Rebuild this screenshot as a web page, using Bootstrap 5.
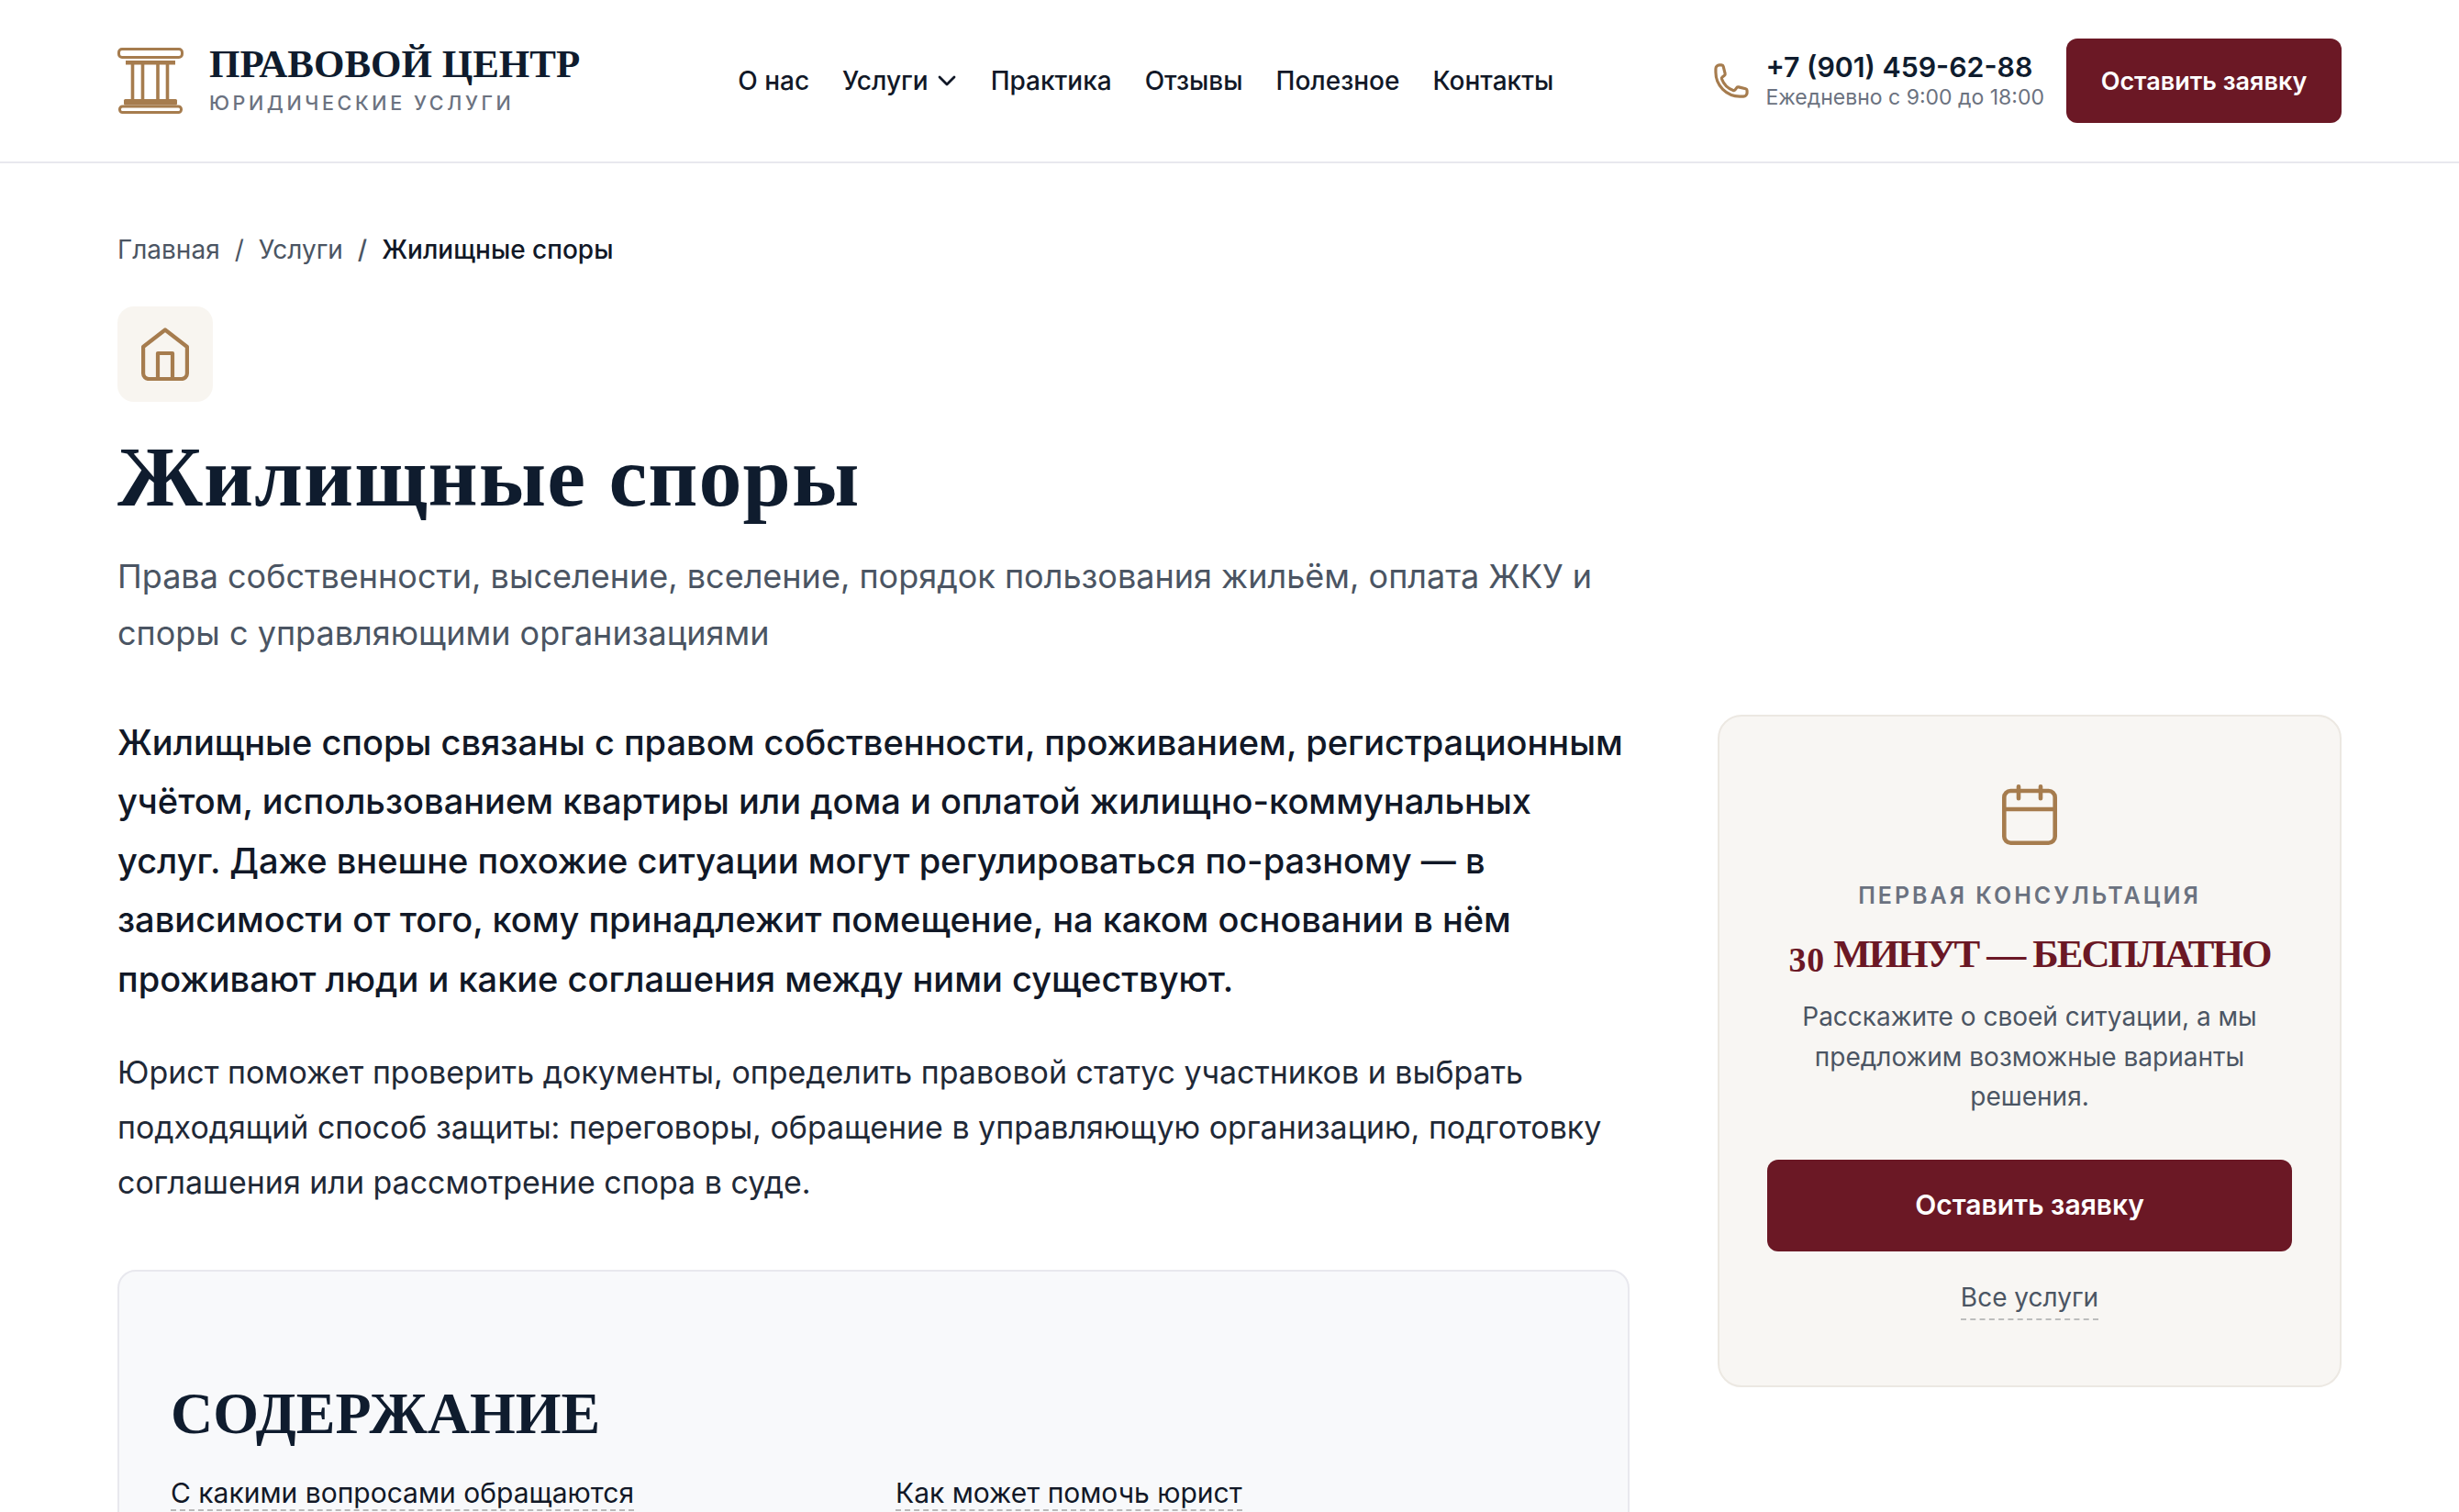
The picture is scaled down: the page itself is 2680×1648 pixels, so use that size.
<!DOCTYPE html>
<html lang="ru">
<head>
<meta charset="utf-8">
<title>Жилищные споры</title>
<link href="https://cdn.jsdelivr.net/npm/bootstrap@5.3.0/dist/css/bootstrap.min.css" rel="stylesheet">
<style>
html,body{height:1648px;overflow:hidden}
body{font-family:Inter,"Noto Sans",sans-serif;color:#111827;background:#fff}
.serif{font-family:"Liberation Serif",serif;font-weight:700}
.wrap{padding:0 128px}
.topbar{height:178px;border-bottom:2px solid #e8e8ee;padding:0 128px}
.logo-mark{margin-right:28px}
.logo-name{font-size:43px;line-height:48px;letter-spacing:0;color:#0f1c2e}
.logo-sub{font-size:21.5px;line-height:28px;letter-spacing:3.6px;font-weight:500;color:#6b7280;margin-top:4px}
.logo-text{margin-top:-5px}
.topnav{margin-left:172px;gap:36px}
.topnav .nav-link{padding:0;font-size:28px;font-weight:500;color:#111827;line-height:40px}
.tel{font-size:30.3px;font-weight:600;line-height:36px;color:#0f1c2e}
.hours{font-size:23px;line-height:30px;color:#6b7280}
.cta{background:#6b1825;border:0;color:#fff;font-weight:600;border-radius:12px;padding:0}
.cta:hover{background:#6b1825;color:#fff}
.cta-top{width:300px;height:92px;font-size:27px;margin-left:24px;padding-top:3px}
.crumbs{padding-top:74px;margin:0;font-size:28px;line-height:40px;--bs-breadcrumb-margin-bottom:0;--bs-breadcrumb-item-padding-x:16px;--bs-breadcrumb-divider-color:#4b5563;--bs-breadcrumb-item-active-color:#111827}
.crumbs a{color:#4b5563;text-decoration:none}
.crumbs .active{font-weight:500}
.tile{width:104px;height:104px;border-radius:18px;background:#f8f5f0;margin-top:42px}
h1.title{font-size:94px;line-height:112px;margin:25px 0 0;color:#0f1c2e;letter-spacing:1.05px}
.subtitle{font-size:36px;line-height:62px;color:#4b5563;margin:21.6px 0 0;max-width:1648px}
.cols{gap:96px;margin-top:56px;align-items:flex-start}
.maincol{flex:0 0 1648px;width:1648px}
.sidecol{flex:0 0 680px;width:680px;margin-top:2px}
.lead-text{font-size:38px;line-height:64.5px;font-weight:500;color:#111827;margin:0}
.body-text{font-size:33.95px;line-height:60px;color:#1f2937;margin:40px 0 0}
.toc{background:#f8f9fb;border:2px solid #e8e8ee;border-radius:20px;margin-top:65px;padding:117px 56px 0;height:500px}
.toc h2{font-size:64px;line-height:76px;margin:0;color:#0f1c2e;letter-spacing:0}
.toc-links{margin-top:28px;font-size:30px;line-height:40px}
.toc-links a{color:#111827;text-decoration:none;border-bottom:2px dashed #b9b9b9}
.toc-links>div{flex:0 0 790px}
.offer{background:#f8f6f3;border:2px solid #ece8e2;border-radius:26px;padding:74px 52px 0;text-align:center;height:733px}
.eyebrow{font-size:25px;line-height:32px;font-weight:600;letter-spacing:3px;color:#6b7280;margin-top:39px}
.offer-title{font-size:43px;line-height:56px;color:#6b1825;margin:20px 0 0;letter-spacing:-1.9px;white-space:nowrap}
.oldnum{font-size:.88em;vertical-align:-.12em;letter-spacing:1px}
.offer-text{font-size:28px;line-height:43.5px;color:#4b5563;margin:14px 0 0}
.cta-side{width:572px;height:100px;font-size:30px;margin-top:46px}
.all-link{display:inline-block;font-size:28px;line-height:38px;color:#4b5563;text-decoration:none;border-bottom:2px dashed #bdbdbd;margin-top:31px;padding-bottom:4px}
</style>
</head>
<body>
<nav class="navbar topbar d-flex align-items-center flex-nowrap">
  <a class="d-flex align-items-center text-decoration-none" href="#">
    <svg width="72" height="72" viewBox="0 0 72 72" fill="none" class="flex-shrink-0 logo-mark" aria-hidden="true">
      <rect x="1.5" y="1.5" width="69" height="9" rx="3.5" stroke="#a67c4e" stroke-width="3"/>
      <rect x="9" y="14" width="54" height="4.5" fill="#a67c4e"/>
      <path d="M16.5 18v38M27.5 18v38M44 18v38M54.5 18v38" stroke="#a67c4e" stroke-width="3.6" stroke-linecap="round"/>
      <rect x="7" y="56" width="58" height="6.5" rx="1.5" fill="#a67c4e"/>
      <rect x="2.5" y="64" width="67" height="6.5" rx="3" stroke="#a67c4e" stroke-width="3"/>
    </svg>
    <span class="d-block logo-text">
      <span class="serif logo-name d-block">ПРАВОВОЙ ЦЕНТР</span>
      <span class="logo-sub d-block">ЮРИДИЧЕСКИЕ УСЛУГИ</span>
    </span>
  </a>
  <ul class="nav topnav flex-nowrap align-items-center">
    <li class="nav-item"><a class="nav-link" href="#">О нас</a></li>
    <li class="nav-item"><a class="nav-link d-flex align-items-center gap-2" href="#">Услуги
      <svg width="24" height="14" viewBox="0 0 24 14" fill="none" aria-hidden="true"><path d="M4 3l8 8 8-8" stroke="#111827" stroke-width="2.8" stroke-linecap="round" stroke-linejoin="round"/></svg></a></li>
    <li class="nav-item"><a class="nav-link" href="#">Практика</a></li>
    <li class="nav-item"><a class="nav-link" href="#">Отзывы</a></li>
    <li class="nav-item"><a class="nav-link" href="#">Полезное</a></li>
    <li class="nav-item"><a class="nav-link" href="#">Контакты</a></li>
  </ul>
  <div class="d-flex align-items-center ms-auto">
    <svg width="42" height="42" viewBox="0 0 24 24" fill="none" stroke="#a67c4e" stroke-width="1.8" class="me-3" aria-hidden="true"><path stroke-linecap="round" stroke-linejoin="round" d="M2.25 6.75c0 8.284 6.716 15 15 15h2.25a2.25 2.25 0 0 0 2.25-2.25v-1.372c0-.516-.351-.966-.852-1.091l-4.423-1.106c-.44-.11-.902.055-1.173.417l-.97 1.293c-.282.376-.769.542-1.21.38a12.035 12.035 0 0 1-7.143-7.143c-.162-.441.004-.928.38-1.21l1.293-.97c.363-.271.527-.734.417-1.173L6.963 3.102a1.125 1.125 0 0 0-1.091-.852H4.5A2.25 2.25 0 0 0 2.25 4.5v2.25Z"/></svg>
    <div>
      <div class="tel">+7 (901) 459-62-88</div>
      <div class="hours">Ежедневно с 9:00 до 18:00</div>
    </div>
    <a href="#" class="btn cta cta-top d-flex align-items-center justify-content-center">Оставить заявку</a>
  </div>
</nav>
<main class="wrap">
  <ol class="breadcrumb crumbs">
    <li class="breadcrumb-item"><a href="#">Главная</a></li>
    <li class="breadcrumb-item"><a href="#">Услуги</a></li>
    <li class="breadcrumb-item active" aria-current="page">Жилищные споры</li>
  </ol>
  <div class="tile d-flex align-items-center justify-content-center">
    <svg width="52" height="58" viewBox="0 0 52 58" fill="none" stroke="#a67c4e" stroke-width="4.2" stroke-linejoin="round" aria-hidden="true"><path d="M26 2.5 2.1 21v29a6 6 0 0 0 6 6h35.8a6 6 0 0 0 6-6V21Z"/><path d="M18 56V28h16v28"/></svg>
  </div>
  <h1 class="serif title">Жилищные споры</h1>
  <p class="subtitle">Права собственности, выселение, вселение, порядок пользования жильём, оплата ЖКУ и споры с управляющими организациями</p>
  <div class="d-flex cols">
    <div class="maincol">
      <p class="lead-text">Жилищные споры связаны с правом собственности, проживанием, регистрационным учётом, использованием квартиры или дома и оплатой жилищно-коммунальных услуг. Даже внешне похожие ситуации могут регулироваться по-разному — в зависимости от того, кому принадлежит помещение, на каком основании в нём проживают люди и какие соглашения между ними существуют.</p>
      <p class="body-text">Юрист поможет проверить документы, определить правовой статус участников и выбрать подходящий способ защиты: переговоры, обращение в управляющую организацию, подготовку соглашения или рассмотрение спора в суде.</p>
      <section class="toc">
        <h2 class="serif">СОДЕРЖАНИЕ</h2>
        <div class="d-flex toc-links">
          <div><a href="#">С какими вопросами обращаются</a></div>
          <div><a href="#">Как может помочь юрист</a></div>
        </div>
      </section>
    </div>
    <aside class="sidecol">
      <div class="offer">
        <svg width="60" height="66" viewBox="0 0 60 66" fill="none" stroke="#a67c4e" stroke-width="4.6" stroke-linecap="round" class="d-block mx-auto" aria-hidden="true"><rect x="2.3" y="7" width="55.4" height="56.7" rx="7"/><path d="M2.3 27h55.4M18 2.3v13M42 2.3v13"/></svg>
        <div class="eyebrow">ПЕРВАЯ КОНСУЛЬТАЦИЯ</div>
        <div class="serif offer-title"><span class="oldnum">30</span> МИНУТ — БЕСПЛАТНО</div>
        <p class="offer-text">Расскажите о своей ситуации, а мы предложим возможные варианты решения.</p>
        <a href="#" class="btn cta cta-side d-flex align-items-center justify-content-center">Оставить заявку</a>
        <a href="#" class="all-link">Все услуги</a>
      </div>
    </aside>
  </div>
</main>
<script src="https://cdn.jsdelivr.net/npm/bootstrap@5.3.0/dist/js/bootstrap.bundle.min.js"></script>
</body>
</html>
